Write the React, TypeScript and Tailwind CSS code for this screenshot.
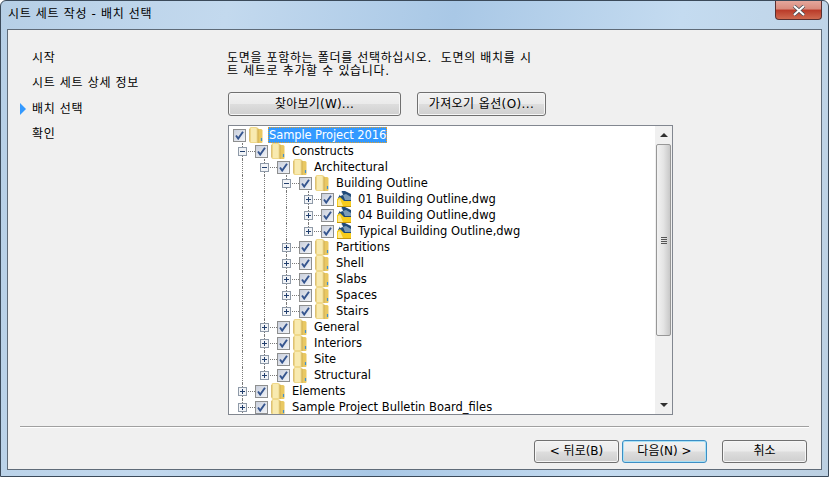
const font = "[font-family:'DejaVu_Sans','Noto_Sans_CJK_KR',sans-serif]";

type Row = { level: number; label: string; guides: number[]; open?: boolean; kind?: "folder" | "dwg"; leaf?: boolean; last?: boolean };

const rows: Row[] = [
   { level: 0, label: "Sample Project 2016", guides: [], open: true, leaf: true },
   { level: 1, label: "Constructs", guides: [], open: true },
   { level: 2, label: "Architectural", guides: [1], open: true },
   { level: 3, label: "Building Outline", guides: [1, 2], open: true },
   { level: 4, label: "01 Building Outline,dwg", guides: [1, 2, 3], kind: "dwg" },
   { level: 4, label: "04 Building Outline,dwg", guides: [1, 2, 3], kind: "dwg" },
   { level: 4, label: "Typical Building Outline,dwg", guides: [1, 2, 3], kind: "dwg", last: true },
   { level: 3, label: "Partitions", guides: [1, 2] },
   { level: 3, label: "Shell", guides: [1, 2] },
   { level: 3, label: "Slabs", guides: [1, 2] },
   { level: 3, label: "Spaces", guides: [1, 2] },
   { level: 3, label: "Stairs", guides: [1, 2], last: true },
   { level: 2, label: "General", guides: [1] },
   { level: 2, label: "Interiors", guides: [1] },
   { level: 2, label: "Site", guides: [1] },
   { level: 2, label: "Structural", guides: [1], last: true },
   { level: 1, label: "Elements", guides: [] },
   { level: 1, label: "Sample Project Bulletin Board_files", guides: [] },
];

function FolderIcon() {
   return (
      <svg width="14" height="16" viewBox="0 0 14 16" className="block shrink-0">
         <path d="M8 2 H12 Q13.5 2 13.5 3.5 V15 Q13.5 16 12.5 16 H8 Z" fill="#e9c862" />
         <path d="M0.5 1.5 Q0.5 0 2 0 H7 Q9 0 9 1.5 V16 H2 Q0.5 16 0.5 14.5 Z" fill="#efd88a" />
         <path d="M2 1 H6.5 Q7.5 1 7.5 2 V15 H2 Z" fill="#f8eab0" />
         <path d="M0.6 2 V14.5" stroke="#d9bd6e" strokeWidth="1" />
         <path d="M9 1.5 V16" stroke="#cfae55" strokeWidth="1" />
         <path d="M12.5 11 V14" stroke="#3f8fd0" strokeWidth="1.2" />
      </svg>
   );
}

function DwgIcon() {
   return (
      <svg width="15" height="16" viewBox="0 0 15 16" className="block shrink-0">
         <path d="M1 7 L5 0 H8 L14 3 V11 H3 Z" fill="#1f4a78" />
         <path d="M6 4 L9 3 L14 6 V9 H8 Z" fill="#7c9cb8" />
         <path d="M3 2 L5 1 L6 4 L3 5 Z" fill="#ffffff" />
         <path d="M0 8 L3 6 L7 10 H14 V16 H0 Z" fill="#f6cc1c" />
         <path d="M1 9 L3 8 L6 15 H1 Z" fill="#ffe98a" />
         <path d="M0 15.5 H14" stroke="#c2950e" strokeWidth="1" />
      </svg>
   );
}

function CheckBox() {
   return (
      <span className="flex h-[13px] w-[13px] shrink-0 items-center justify-center border border-[#8e8f8f] bg-[linear-gradient(135deg,#c9cfdc,#f2f4f8)]">
         <svg width="9" height="9" viewBox="0 0 9 9">
            <path d="M1 4.5 L3.2 7.6 L8 0.8" fill="none" stroke="#35558f" strokeWidth="1.9" />
         </svg>
      </span>
   );
}

function Expander({ open, last }: { open?: boolean; last?: boolean }) {
   return (
      <span className="relative h-4 w-[17px] shrink-0">
         <span className={`absolute top-0 left-[4px] border-l border-dotted border-[#7a7a7a] ${last ? "h-2" : "h-4"}`} />
         <span className="absolute top-[8px] left-[4px] w-[13px] border-t border-dotted border-[#7a7a7a]" />
         <span className="absolute top-[4px] left-0 flex h-[9px] w-[9px] items-center justify-center border border-[#8f9aa8] bg-[#f2f4f7]">
            <span className="relative block h-[5px] w-[5px]">
               <span className="absolute top-[2px] left-0 h-px w-[5px] bg-[#23406e]" />
               {!open && <span className="absolute top-0 left-[2px] h-[5px] w-px bg-[#23406e]" />}
            </span>
         </span>
      </span>
   );
}

function TreeRow({ row }: { row: Row }) {
   const first = row.level === 0;
   return (
      <div className="flex h-4 items-center text-[11.5px]">
         <span className={first ? "w-[4px] shrink-0" : "w-[9px] shrink-0"} />
         {Array.from({ length: Math.max(row.level - 1, 0) }).map((_, i) => (
            <span key={i} className="h-4 w-[22px] shrink-0">
               {row.guides.includes(i + 1) && <span className="ml-[4px] block h-4 border-l border-dotted border-[#7a7a7a]" />}
            </span>
         ))}
         {!first && <Expander open={row.open} last={row.last} />}
         <CheckBox />
         <span className="ml-[3px] shrink-0">{row.kind === "dwg" ? <DwgIcon /> : <FolderIcon />}</span>
         {first ? (
            <span className="ml-[5px] flex h-4 items-center border border-dotted border-[#e0a030] bg-[#3399ff] tracking-[-0.1px] text-white">{row.label}</span>
         ) : (
            <span className={`whitespace-nowrap ${row.kind === "dwg" ? "ml-[6px]" : "ml-[7px]"}`}>{row.label}</span>
         )}
      </div>
   );
}

function Button({ children, className = "", primary }: { children: React.ReactNode; className?: string; primary?: boolean }) {
   return (
      <button
         className={`flex items-center justify-center rounded-[3px] border text-black bg-[linear-gradient(180deg,#f2f2f2_0%,#ebebeb_48%,#dddddd_52%,#cfcfcf_100%)] ${
            primary ? "border-[#3c8ec4] shadow-[inset_0_0_0_1px_#a8e0f5]" : "border-[#707070] shadow-[inset_0_0_0_1px_#f6f6f6]"
         } ${className}`}
      >
         {children}
      </button>
   );
}

function Scrollbar() {
   return (
      <div className="flex h-full w-[17px] shrink-0 flex-col items-center bg-[#f0f0f0]">
         <div className="flex h-[18px] items-center justify-center">
            <span className="h-0 w-0 border-x-[4px] border-b-[4px] border-x-transparent border-b-[#303030]" />
         </div>
         <div className="flex h-[192px] w-[15px] items-center justify-center rounded-[2px] border border-[#979797] bg-[linear-gradient(90deg,#f2f2f2,#e4e4e4_50%,#c8c8c8)]">
            <span className="flex flex-col gap-px">
               <span className="h-px w-[6px] bg-[#555]" />
               <span className="h-px w-[6px] bg-[#555]" />
               <span className="h-px w-[6px] bg-[#555]" />
               <span className="h-px w-[6px] bg-[#555]" />
            </span>
         </div>
         <div className="flex-1" />
         <div className="flex h-[18px] items-center justify-center">
            <span className="h-0 w-0 border-x-[4px] border-t-[4px] border-x-transparent border-t-[#303030]" />
         </div>
      </div>
   );
}

export default function App() {
   return (
      <div className={`flex h-[477px] w-[829px] flex-col overflow-hidden rounded-t-[6px] border border-[#3b4a5a] bg-[linear-gradient(100deg,#b6cfe6_0%,#c3d9ee_25%,#a9c8e6_50%,#c4dbf0_75%,#bcd0e2_100%)] px-[6px] pb-[6px] text-[12px] leading-[13px] text-black ${font}`}>
         <div className="flex h-[28px] shrink-0 items-start justify-between">
            <div className="pt-[7px] pl-[1px] tracking-[0.65px]">시트 세트 작성 - 배치 선택</div>
            <div className="flex h-[19px] w-[47px] items-center justify-center rounded-b-[4px] border border-t-0 border-[#5a3030] bg-[linear-gradient(180deg,#e5a79c_0%,#d98a7c_45%,#b93a28_50%,#cf6a50_100%)]">
               <svg width="14" height="11" viewBox="0 0 14 11">
                  <path d="M2 1 L12 10 M12 1 L2 10" stroke="#4a5058" strokeWidth="3.6" />
                  <path d="M2 1 L12 10 M12 1 L2 10" stroke="#ffffff" strokeWidth="2" />
               </svg>
            </div>
         </div>
         <div className="flex min-h-0 flex-1 flex-col border border-[#5f6b78] bg-[#f0f0f0]">
            <div className="flex h-[396px] shrink-0">
               <nav className="relative w-[219px] shrink-0 pt-[15px] pl-[24px] tracking-[0.65px]">
                  <div className="flex h-[26px] items-center">시작</div>
                  <div className="flex h-[25px] items-center">시트 세트 상세 정보</div>
                  <div className="flex h-[26px] items-center">
                     <span className="absolute left-[12px] h-0 w-0 border-y-[6px] border-l-[6px] border-y-transparent border-l-[#3399ff]" />
                     배치 선택
                  </div>
                  <div className="flex h-[25px] items-center">확인</div>
               </nav>
               <div className="flex flex-1 flex-col pt-[22px]">
                  <p className="whitespace-nowrap tracking-[0.65px]">
                     도면을 포함하는 폴더를 선택하십시오.&nbsp; 도면의 배치를 시
                     <br />트 세트로 추가할 수 있습니다.
                  </p>
                  <div className="mt-[14px] ml-px flex gap-[16px]">
                     <Button className="h-[24px] w-[173px] tracking-[0.2px]">찾아보기(W)...</Button>
                     <Button className="h-[24px] w-[129px] tracking-[0.4px]">가져오기 옵션(O)...</Button>
                  </div>
                  <div className="mt-[9px] ml-px flex h-[290px] w-[445px] border border-[#828790] bg-white">
                     <div className="min-w-0 flex-1 overflow-hidden pt-px">
                        {rows.map((r) => (
                           <TreeRow key={r.label} row={r} />
                        ))}
                     </div>
                     <Scrollbar />
                  </div>
               </div>
            </div>
            <div className="mx-[12px] border-t border-b border-t-[#a0a0a0] border-b-white" />
            <div className="mt-[12px] flex justify-end pr-[14px]">
               <div className="flex gap-[3px]">
                  <Button className="h-[23px] w-[85px]">&lt; 뒤로(B)</Button>
                  <Button primary className="h-[23px] w-[85px]">다음(N) &gt;</Button>
               </div>
               <Button className="ml-[15px] h-[23px] w-[85px]">취소</Button>
            </div>
         </div>
      </div>
   );
}
